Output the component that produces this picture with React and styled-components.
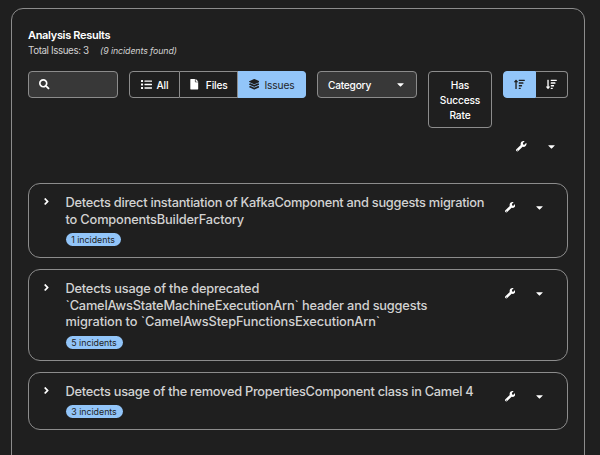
import React from "react";
import styled, { createGlobalStyle } from "styled-components";
import {
  FaSearch,
  FaList,
  FaFile,
  FaLayerGroup,
  FaCaretDown,
  FaWrench,
  FaAngleRight,
  FaSortAmountUp,
  FaSortAmountDown,
} from "react-icons/fa";

const Global = createGlobalStyle`
  * { box-sizing: border-box; }
  body {
    margin: 0;
    background: #1f1f1f;
    color: #fff;
    font-family: Inter, "Liberation Sans", sans-serif;
    overflow: hidden;
  }
  svg { display: block; flex: none; }
`;

const Page = styled.main`
  height: 455px;
  padding: 8px 15px 0 10.5px;
  overflow: hidden;
`;

const Panel = styled.section`
  height: 480px;
  padding: 19px 16px 0 16.5px;
  border: 1px solid #8c8c8c;
  border-radius: 12px;
`;

const Title = styled.h1`
  margin: 0 0 2px;
  font-size: 11px;
  line-height: 14px;
  font-weight: 600;
  letter-spacing: -0.32px;
`;

const Summary = styled.div`
  display: flex;
  gap: 11.5px;
  font-size: 9.8px;
  line-height: 14px;
  letter-spacing: -0.4px;
  color: #d2d2d2;
`;

const Found = styled.em`
  font-size: 8.8px;
  letter-spacing: -0.09px;
`;

const Toolbar = styled.div`
  display: flex;
  align-items: flex-start;
  height: 57px;
  margin-top: 13px;
  gap: 11px;
`;

const SearchField = styled.div`
  display: flex;
  align-items: center;
  width: 90px;
  height: 27px;
  padding-left: 10px;
  border: 1px solid #8c8c8c;
  border-radius: 4px;
  background: #383838;
`;

const ToggleGroup = styled.div`
  display: flex;
  height: 27px;
`;

const Toggle = styled.button`
  display: flex;
  align-items: center;
  justify-content: center;
  gap: ${(p) => p.$gap || 5}px;
  width: ${(p) => p.$width}px;
  height: 27px;
  margin: 0;
  padding: 0;
  border: 1px solid ${(p) => (p.$selected ? "#92c5f9" : "#8c8c8c")};
  border-left-width: ${(p) => (p.$joined ? 0 : 1)}px;
  border-radius: ${(p) => p.$radius};
  background: ${(p) => (p.$selected ? "#92c5f9" : "transparent")};
  color: ${(p) => (p.$selected ? "#1f1f1f" : "#fff")};
  font: ${(p) => (p.$selected ? 400 : 500)} 10.2px Inter, sans-serif;
  letter-spacing: -0.15px;
`;

const Select = styled.button`
  display: flex;
  align-items: center;
  justify-content: space-between;
  width: 100px;
  height: 27px;
  padding: 0 10.5px 0 10px;
  border: 1px solid #8c8c8c;
  border-radius: 4px;
  background: #383838;
  color: #fff;
  font: 500 10.2px Inter, sans-serif;
  letter-spacing: -0.25px;
`;

const FilterButton = styled.button`
  width: 64px;
  height: 57px;
  padding: 1px 8px 0;
  border: 1px solid #8c8c8c;
  border-radius: 4px;
  background: transparent;
  color: #fff;
  font: 500 10.2px/15px Inter, sans-serif;
  letter-spacing: -0.15px;
`;

const Actions = styled.div`
  display: flex;
  align-items: center;
  justify-content: flex-end;
  gap: 19px;
  height: 12px;
  color: #fff;
`;

const ToolbarActions = styled(Actions)`
  margin-top: 12.5px;
  padding-right: 11.5px;
`;

const IssueList = styled.div`
  display: flex;
  flex-direction: column;
  gap: 11px;
  margin-top: 30px;
`;

const Card = styled.article`
  display: flex;
  align-items: flex-start;
  height: ${(p) => p.$height}px;
  padding: 11px 22px 0 12px;
  border: 1px solid #8c8c8c;
  border-radius: 12px;
`;

const Expander = styled.span`
  width: 24.5px;
  padding-top: 1.5px;
`;

const Body = styled.div`
  flex: 1;
`;

const CardTitle = styled.h2`
  margin: 0;
  padding-top: 0.5px;
  font-size: 12.8px;
  line-height: 16.7px;
  font-weight: 550;
  color: #d2d2d2;
  white-space: nowrap;
`;

const Line = styled.span`
  display: block;
  letter-spacing: ${(p) => p.$tracking}px;
`;

const Badge = styled.span`
  display: block;
  width: ${(p) => p.$width}px;
  height: 13px;
  margin-top: 4.5px;
  border-radius: 7px;
  background: #92c5f9;
  color: #1f1f1f;
  font-size: 8.8px;
  line-height: 13px;
  text-align: center;
`;

const CardActions = styled(Actions)`
  margin-top: 7px;
`;

const issues = [
  {
    height: 75,
    lines: [
      ["Detects direct instantiation of KafkaComponent and suggests migration", -0.265],
      ["to ComponentsBuilderFactory", -0.17],
    ],
    count: 1,
    badge: 55,
  },
  {
    height: 92,
    lines: [
      ["Detects usage of the deprecated", -0.21],
      ["`CamelAwsStateMachineExecutionArn` header and suggests", -0.18],
      ["migration to `CamelAwsStepFunctionsExecutionArn`", -0.1],
    ],
    count: 5,
    badge: 57,
  },
  {
    height: 58,
    lines: [["Detects usage of the removed PropertiesComponent class in Camel 4", -0.265]],
    count: 3,
    badge: 57,
  },
];

export default function App() {
  return (
    <Page>
      <Global />
      <Panel>
        <Title>Analysis Results</Title>
        <Summary>
          <span>Total Issues: 3</span>
          <Found>(9 incidents found)</Found>
        </Summary>
        <Toolbar>
          <SearchField>
            <FaSearch size={10.5} />
          </SearchField>
          <ToggleGroup>
            <Toggle $width={51} $radius="4px 0 0 4px">
              <FaList size={11} />
              All
            </Toggle>
            <Toggle $width={58} $joined $gap={6} $radius="0">
              <FaFile size={10.5} />
              Files
            </Toggle>
            <Toggle $width={68} $joined $selected $gap={5.5} $radius="0 4px 4px 0">
              <FaLayerGroup size={10.5} />
              Issues
            </Toggle>
          </ToggleGroup>
          <Select>
            Category
            <FaCaretDown size={11} />
          </Select>
          <FilterButton>Has Success Rate</FilterButton>
          <ToggleGroup>
            <Toggle $width={33} $selected $radius="4px 0 0 4px">
              <FaSortAmountUp size={10.8} />
            </Toggle>
            <Toggle $width={32} $joined $radius="0 4px 4px 0">
              <FaSortAmountDown size={10.8} />
            </Toggle>
          </ToggleGroup>
        </Toolbar>
        <ToolbarActions>
          <FaWrench size={10.5} />
          <FaCaretDown size={11} />
        </ToolbarActions>
        <IssueList>
          {issues.map((issue) => (
            <Card key={issue.count} $height={issue.height}>
              <Expander>
                <FaAngleRight size={11} />
              </Expander>
              <Body>
                <CardTitle>
                  {issue.lines.map(([text, tracking]) => (
                    <Line key={text} $tracking={tracking}>
                      {text}
                    </Line>
                  ))}
                </CardTitle>
                <Badge $width={issue.badge}>{issue.count} incidents</Badge>
              </Body>
              <CardActions>
                <FaWrench size={10.5} />
                <FaCaretDown size={11} />
              </CardActions>
            </Card>
          ))}
        </IssueList>
      </Panel>
    </Page>
  );
}
